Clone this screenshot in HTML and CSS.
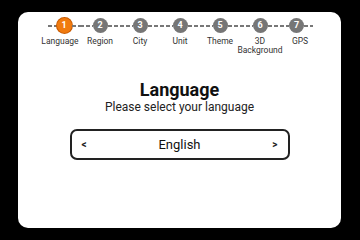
FILE: index.html
```html
<!DOCTYPE html>
<html lang="en">
<head>
    <meta charset="UTF-8">
    <meta name="viewport" content="width=device-width, initial-scale=1.0">
    <title>Setup - Language</title>
    <link rel="stylesheet" href="styles.css">
</head>
<body>
    <section class="card">
        <ol class="stepper">
            <li class="step first active"><div class="track"><span class="dash"></span><span class="dot">1</span><span class="dash"></span></div><span class="label">Language</span></li>
            <li class="step"><div class="track"><span class="dash"></span><span class="dot">2</span><span class="dash"></span></div><span class="label">Region</span></li>
            <li class="step"><div class="track"><span class="dash"></span><span class="dot">3</span><span class="dash"></span></div><span class="label">City</span></li>
            <li class="step"><div class="track"><span class="dash"></span><span class="dot">4</span><span class="dash"></span></div><span class="label">Unit</span></li>
            <li class="step"><div class="track"><span class="dash"></span><span class="dot">5</span><span class="dash"></span></div><span class="label">Theme</span></li>
            <li class="step"><div class="track"><span class="dash"></span><span class="dot">6</span><span class="dash"></span></div><span class="label">3D<br>Background</span></li>
            <li class="step last"><div class="track"><span class="dash"></span><span class="dot">7</span><span class="dash"></span></div><span class="label">GPS</span></li>
        </ol>

        <h1 class="title">Language</h1>
        <p class="subtitle">Please select your language</p>

        <div class="picker">
            <button class="arrow">&lt;</button>
            <span class="value">English</span>
            <button class="arrow">&gt;</button>
        </div>
    </section>
</body>
</html>
```

FILE: styles.css
```css
body {
    margin: 0;
    background-color: #000;
    font-family: Roboto, "Noto Sans", sans-serif;
    color: #111;
}
.card {
    margin: 12px 19px 12px 18px;
    height: 216px;
    background: #fff;
    border-radius: 10px;
    box-sizing: border-box;
    padding-top: 6px;
}
.stepper {
    list-style: none;
    margin: 0;
    padding: 0 0 0 22px;
    display: flex;
}
.step {
    width: 40px;
    display: flex;
    flex-direction: column;
    align-items: center;
}
.track {
    width: 100%;
    display: flex;
    align-items: center;
}
.dash {
    flex: 1;
    height: 2px;
    background: repeating-linear-gradient(to right, #777 0 4px, transparent 4px 6px);
}
.first .dash:first-child {
    margin-left: 8px;
}
.last .dash:last-child {
    margin-right: 7px;
}
.dot {
    width: 15px;
    height: 15px;
    border-radius: 50%;
    background: #767676;
    color: #fff;
    font-size: 9px;
    font-weight: 700;
    line-height: 15px;
    text-align: center;
}
.active .dot {
    background: #f07b10;
    box-shadow: 0 0 0 1px #c85a00;
}
.label {
    margin-top: 4px;
    font-size: 8.5px;
    line-height: 9px;
    color: #333;
    white-space: nowrap;
    text-align: center;
}
.title {
    margin: 25px 0 0;
    text-align: center;
    font-size: 18px;
    line-height: 20px;
    font-weight: 700;
    color: #111;
}
.subtitle {
    margin: 0;
    text-align: center;
    font-size: 12px;
    line-height: 14px;
    color: #222;
}
.picker {
    margin: 15px auto 0;
    width: 220px;
    height: 31px;
    box-sizing: border-box;
    border: 2px solid #222;
    border-radius: 7px;
    display: flex;
    align-items: center;
    justify-content: space-between;
    padding: 0 10px;
}
.arrow {
    background: none;
    border: none;
    padding: 0;
    font-family: inherit;
    font-size: 10px;
    font-weight: 700;
    color: #222;
}
.value {
    font-size: 13px;
    color: #111;
}
```
